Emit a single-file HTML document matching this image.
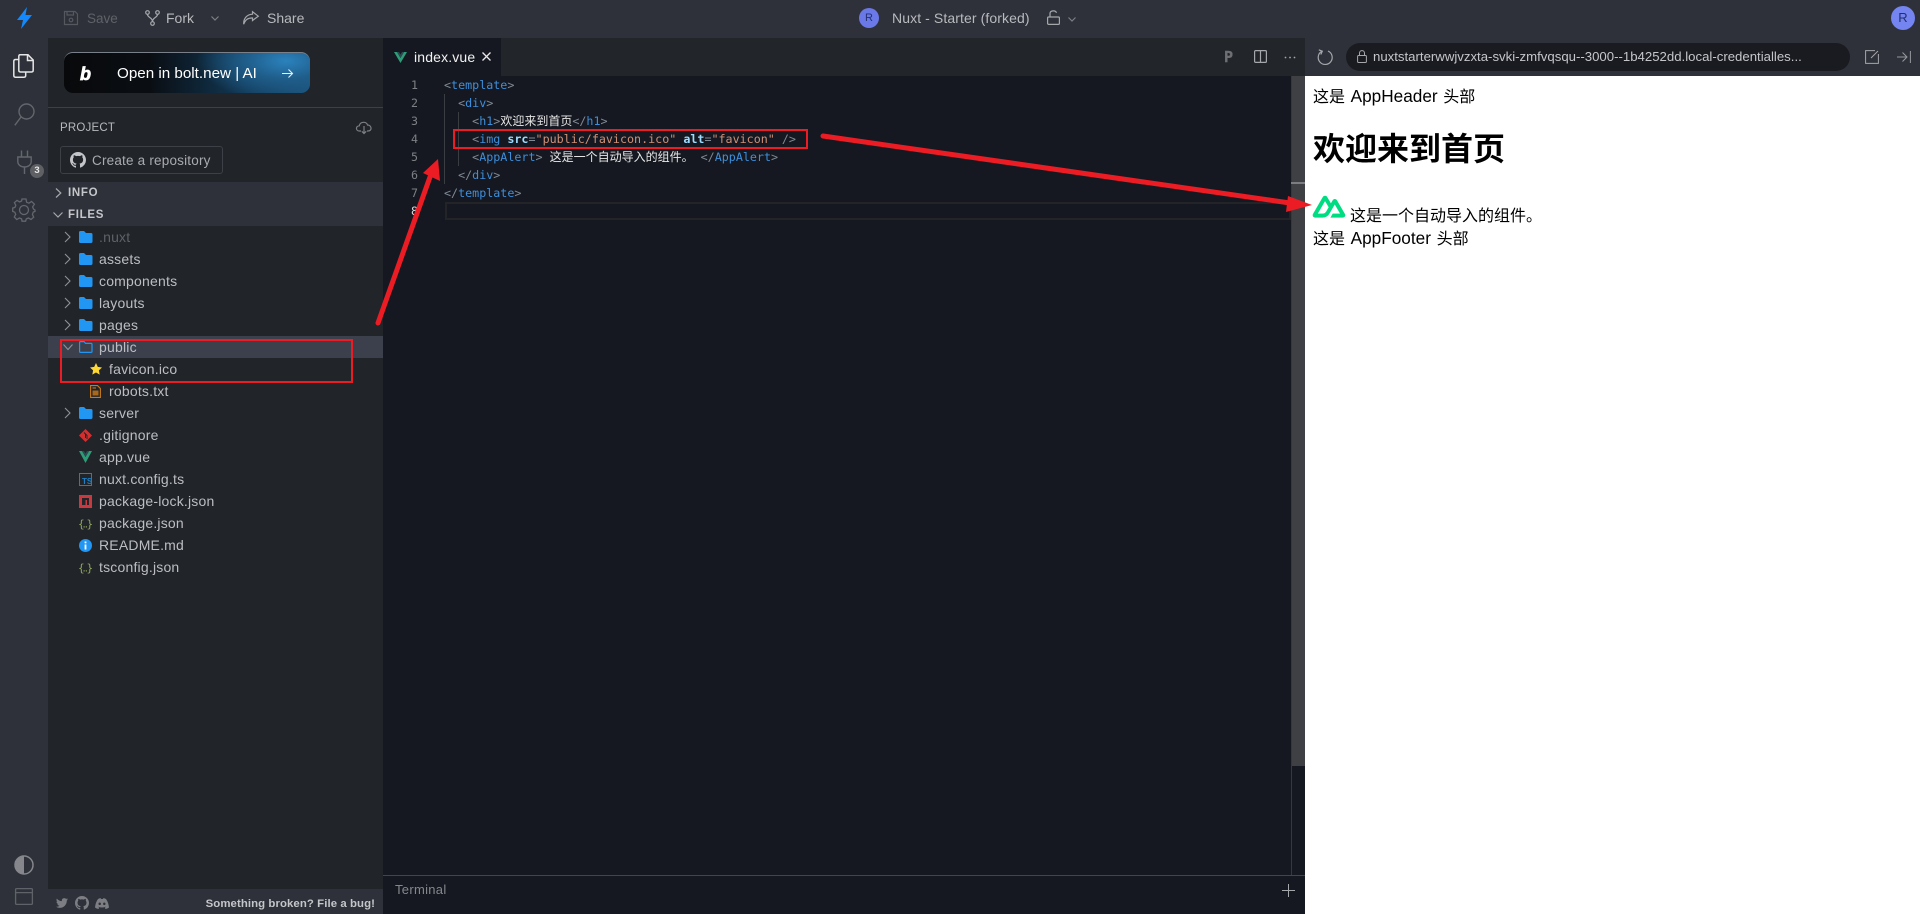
<!DOCTYPE html>
<html lang="zh"><head><meta charset="utf-8"><title>Nuxt - Starter (forked)</title>
<style>
*{box-sizing:border-box}
html,body{margin:0;padding:0;width:1920px;height:914px;overflow:hidden;background:#2e3139;font-family:"Liberation Sans","Noto Sans CJK SC",sans-serif}
.a{position:absolute}
svg{position:absolute;overflow:visible}
.t{position:absolute;white-space:nowrap;line-height:18px}
.row{position:absolute;left:99px;font-size:14px;letter-spacing:.2px;color:#bcbec4;white-space:nowrap;line-height:20px}
.c{position:absolute;left:444px;font:11.7px/18px "DejaVu Sans Mono","Noto Sans CJK SC",monospace;white-space:pre;color:#808a94;height:18px}
.c b{font-weight:400;color:#3d8fdc}
.c i{font-style:normal;color:#9cdcfe;font-weight:700}
.c u{text-decoration:none;color:#ce9178}
.c span{font-family:"Noto Sans CJK SC",sans-serif;font-size:12px;color:#e6e6e6}
.n{position:absolute;left:400px;width:18px;text-align:right;font:11.62px/18px "DejaVu Sans Mono",monospace;color:#7d8185}
.ic{fill:none;stroke:#7d7f85;stroke-width:1.2}
.pv{position:absolute;color:#000;font-size:16px;line-height:22px;white-space:nowrap;word-spacing:1.2px}
.pv em{font-style:normal;font-size:17.2px}
</style></head><body>

<!-- regions -->
<div class="a" style="left:48px;top:38px;width:335px;height:851px;background:#212429"></div>
<div class="a" style="left:48px;top:889px;width:335px;height:25px;background:#2e3139"></div>
<div class="a" style="left:383px;top:38px;width:922px;height:38px;background:#22252a"></div>
<div class="a" style="left:383px;top:38px;width:118px;height:38px;background:#151820"></div>
<div class="a" style="left:383px;top:76px;width:922px;height:838px;background:#151820"></div>
<div class="a" style="left:1305px;top:76px;width:615px;height:838px;background:#fff"></div>
<div class="a" style="left:1291px;top:76px;width:14px;height:690px;background:#3f4044"></div>
<div class="a" style="left:1291px;top:76px;width:1px;height:799px;background:#36383c"></div>
<div class="a" style="left:1291px;top:182px;width:14px;height:2px;background:#7b7d80"></div>
<div class="a" style="left:383px;top:875px;width:922px;height:1px;background:#43454c"></div>

<!-- top bar -->
<svg style="left:17px;top:7px" width="15" height="22" viewBox="0 0 15 22"><path d="M10 0 L0 13 H6 L4 22 L15 8 H8.5 Z" fill="#1389fd"/></svg>
<svg class="ic" style="left:64px;top:11px;stroke:#55585f" width="14" height="14" viewBox="0 0 14 14"><path d="M.5.5H11L13.5 3V13.5H.5Z"/><path d="M3 .5V4H9.5V.5"/><circle cx="7" cy="9" r="1.8"/></svg>
<div class="t" style="left:87px;top:10px;font-size:13.5px;color:#5f6269">Save</div>
<svg class="ic" style="left:145px;top:10px;stroke:#a5a7ab" width="15" height="16" viewBox="0 0 15 16"><circle cx="2.5" cy="2.5" r="1.8"/><circle cx="12.5" cy="2.5" r="1.8"/><circle cx="7.5" cy="13.5" r="1.8"/><path d="M2.5 4.3C2.5 8 7.5 7 7.5 11.7M12.5 4.3C12.5 8 7.5 7 7.5 11.7"/></svg>
<div class="t" style="left:166px;top:9px;font-size:14px;color:#b8babe">Fork</div>
<svg class="ic" style="left:211px;top:16px" width="8" height="5" viewBox="0 0 8 5"><path d="M.5.5L4 4 7.5.5"/></svg>
<svg class="ic" style="left:243px;top:11px;stroke:#a5a7ab" width="16" height="14" viewBox="0 0 16 14"><path d="M9.5.7L15.3 5.2 9.5 9.5V7C5 6.8 2.5 8.5.7 13.2.4 7.5 3.8 3.4 9.5 3.2Z"/></svg>
<div class="t" style="left:267px;top:9px;font-size:14px;color:#b8babe">Share</div>

<div class="a" style="left:859px;top:8px;width:20px;height:20px;border-radius:50%;background:#6b79e8;color:#23306f;font-size:11px;line-height:20px;text-align:center">R</div>
<div class="t" style="left:892px;top:9px;font-size:14px;letter-spacing:.1px;color:#b8babe">Nuxt - Starter (forked)</div>
<svg class="ic" style="left:1047px;top:10px;stroke:#a5a7ab" width="13" height="15" viewBox="0 0 13 15"><rect x=".6" y="7" width="11.8" height="7.4" rx="1"/><path d="M3 7V3.5C3 .5 8.5-.2 9.5 2.8"/></svg>
<svg class="ic" style="left:1068px;top:17px" width="8" height="5" viewBox="0 0 8 5"><path d="M.5.5L4 4 7.5.5"/></svg>
<div class="a" style="left:1891px;top:6px;width:24px;height:24px;border-radius:50%;background:#7484f0;color:#23306f;font-size:13px;line-height:24px;text-align:center">R</div>

<!-- activity bar -->
<svg class="ic" style="left:13px;top:54px;stroke:#e4e5e7;stroke-width:1.5" width="21" height="24" viewBox="0 0 21 24"><path d="M6 5.5H2.5Q.8 5.5.8 7.2V21.5Q.8 23.2 2.5 23.2H11Q12.7 23.2 12.7 21.5V18"/><path d="M7 .8H15L20.2 6V16.3Q20.2 18 18.5 18H7.5Q5.8 18 5.8 16.3V2.5Q5.8.8 7 .8Z"/><path d="M14.5.8V6.5H20.2"/></svg>
<svg class="ic" style="left:14px;top:103px;stroke:#63666c;stroke-width:1.4" width="21" height="23" viewBox="0 0 21 23"><circle cx="12.5" cy="8.5" r="7.5"/><path d="M7 14L.8 22.3"/></svg>
<svg class="ic" style="left:17px;top:150px;stroke:#63666c;stroke-width:1.4" width="15" height="24" viewBox="0 0 15 24"><path d="M4.5.5V7M10.5.5V7M.8 7H14.2V11.5C14.2 15 11 17 7.5 17S.8 15 .8 11.5ZM7.5 17V24"/></svg>
<div class="a" style="left:30px;top:164px;width:14px;height:14px;border-radius:50%;background:#5e6064;color:#e8e8e8;font-size:9.5px;font-weight:700;line-height:14px;text-align:center">3</div>
<svg class="ic" style="left:12px;top:198px;stroke:#63666c;stroke-width:1.3" width="24" height="24" viewBox="0 0 24 24"><path d="M10 1H14L14.6 4.2 16.9 5.2 19.6 3.4 22.4 6.2 20.6 8.9 21.6 11.2 23 12 V13.4 L21.3 14 20.4 16.3 21.7 19.2 19 21.5 16.4 20 14.3 20.9 13.6 23.2H10L9.6 20.9 7.4 20 4.8 21.6 2.3 19 3.7 16.3 2.8 14.2.7 13.4V10L2.9 9.5 3.8 7.3 2.4 4.7 5 2.4 7.6 3.9 9.6 3Z"/><circle cx="12" cy="12" r="4.5"/></svg>
<svg style="left:14px;top:855px" width="20" height="20" viewBox="0 0 20 20"><circle cx="10" cy="10" r="9" fill="none" stroke="#85878c" stroke-width="1.5"/><path d="M10 1A9 9 0 0 0 10 19Z" fill="#85878c"/></svg>
<svg class="ic" style="left:15px;top:888px;stroke:#5f6268;stroke-width:1.3" width="18" height="17" viewBox="0 0 18 17"><rect x=".6" y=".6" width="16.8" height="15.8" rx="1"/><path d="M.6 4.6H17.4"/></svg>

<!-- sidebar -->
<div class="a" style="left:64px;top:52px;width:246px;height:41px;border-radius:9px;background:radial-gradient(ellipse 90px 40px at 222px 8px,#2b82bd 0%,#1f5d8a 45%,rgba(18,50,75,0) 100%),linear-gradient(90deg,#08090b 0%,#0a0e13 35%,#123a58 75%,#1a5178 100%);border-top:1px solid #7a8089"></div>
<div class="t" style="left:80px;top:65px;font:italic 700 18px/18px 'Liberation Sans',sans-serif;color:#fff;-webkit-text-stroke:.7px #fff">b</div>
<div class="t" style="left:117px;top:64.5px;font-size:15.2px;color:#fff">Open in bolt.new | AI</div>
<svg style="left:282px;top:69px;fill:none;stroke:#e8edf2;stroke-width:1.1" width="11" height="9" viewBox="0 0 11 9"><path d="M0 4.5H10.5M6.500.5L10.500 4.500 6.500 8.500"/></svg>
<div class="a" style="left:48px;top:107px;width:335px;height:1px;background:#3d4047"></div>
<div class="t" style="left:60px;top:119px;font-size:11.5px;color:#b8babe;letter-spacing:.2px">PROJECT</div>
<svg class="ic" style="left:356px;top:121px" width="16" height="13" viewBox="0 0 16 13"><path d="M5 10H3.500C-.5 10-.5 5 3.300 4.800 4 .6 10.500 0 11.500 4 15.700 4 16.500 10 12 10H11"/><path d="M8 5V12.500M5.800 10.300L8 12.500 10.200 10.300"/></svg>
<div class="a" style="left:60px;top:146px;width:163px;height:28px;border:1px solid #3d4047;border-radius:3px"></div>
<svg style="left:70px;top:152px" width="16" height="16" viewBox="0 0 16 16"><path fill="#c3c5c9" d="M8 0C3.58 0 0 3.58 0 8c0 3.54 2.29 6.53 5.47 7.59.4.07.55-.17.55-.38 0-.19-.01-.82-.01-1.49-2.01.37-2.53-.49-2.69-.94-.09-.23-.48-.94-.82-1.13-.28-.15-.68-.52-.01-.53.63-.01 1.08.58 1.23.82.72 1.21 1.87.87 2.33.66.07-.52.28-.87.51-1.07-1.78-.2-3.64-.89-3.64-3.95 0-.87.31-1.59.82-2.15-.08-.2-.36-1.02.08-2.12 0 0 .67-.21 2.2.82.64-.18 1.32-.27 2-.27.68 0 1.36.09 2 .27 1.53-1.04 2.2-.82 2.2-.82.44 1.1.16 1.92.08 2.12.51.56.82 1.27.82 2.15 0 3.07-1.87 3.75-3.65 3.95.29.25.54.73.54 1.48 0 1.07-.01 1.93-.01 2.2 0 .21.15.46.55.38A8.013 8.013 0 0016 8c0-4.42-3.58-8-8-8z"/></svg>
<div class="t" style="left:92px;top:152px;font-size:13.5px;letter-spacing:.2px;color:#a9abb0">Create a repository</div>

<div class="a" style="left:48px;top:182px;width:335px;height:44px;background:#2e3139"></div>
<svg class="ic" style="left:55px;top:188px;stroke:#a5a7ab" width="7" height="10" viewBox="0 0 7 10"><path d="M1 .5L5.800 5 1 9.500"/></svg>
<svg class="ic" style="left:53px;top:212px;stroke:#a5a7ab" width="10" height="6" viewBox="0 0 10 6"><path d="M.5.5L5 5 9.500.5"/></svg>
<div class="t" style="left:68px;top:184px;font-size:11.5px;font-weight:700;letter-spacing:.7px;color:#c4c6ca">INFO</div>
<div class="t" style="left:68px;top:206px;font-size:11.5px;font-weight:700;letter-spacing:.7px;color:#c4c6ca">FILES</div>

<div class="a" style="left:48px;top:336px;width:335px;height:22px;background:#3c404d"></div>

<!-- chevrons -->
<svg style="left:64px;top:232px;fill:none;stroke:#8f9197;stroke-width:1.1" width="8" height="190" viewBox="0 0 8 190"><path d="M1 0L6 5 1 10M1 22L6 27 1 32M1 44L6 49 1 54M1 66L6 71 1 76M1 88L6 93 1 98M1 176L6 181 1 186"/></svg>
<svg style="left:63px;top:344px;fill:none;stroke:#8f9197;stroke-width:1.1" width="10" height="6" viewBox="0 0 10 6"><path d="M.5.5L5 5.500 9.500.5"/></svg>

<!-- folders -->
<svg width="0" height="0" style="position:absolute"><defs><path id="fd" d="M0 1.500Q0 0 1.500 0H5L7 2H12Q13.500 2 13.500 3.500V10.500Q13.500 12 12 12H1.500Q0 12 0 10.500Z" fill="#2196f3"/></defs></svg>
<svg style="left:79px;top:231px" width="14" height="12"><use href="#fd"/></svg>
<svg style="left:79px;top:253px" width="14" height="12"><use href="#fd"/></svg>
<svg style="left:79px;top:275px" width="14" height="12"><use href="#fd"/></svg>
<svg style="left:79px;top:297px" width="14" height="12"><use href="#fd"/></svg>
<svg style="left:79px;top:319px" width="14" height="12"><use href="#fd"/></svg>
<svg style="left:79px;top:407px" width="14" height="12"><use href="#fd"/></svg>
<svg style="left:79px;top:341px;fill:none;stroke:#2196f3;stroke-width:1.2" width="14" height="12" viewBox="0 0 14 12"><path d="M.6 1.500Q.6.6 1.500.6H5L6.600 2.400H12Q13 2.400 13 3.500V10.500Q13 11.400 12 11.400H1.500Q.6 11.400.6 10.500Z"/></svg>

<!-- file icons -->
<svg style="left:90px;top:363px" width="12" height="12" viewBox="0 0 12 12"><path d="M6 0L7.800 3.900 12 4.500 8.900 7.400 9.700 11.600 6 9.500 2.300 11.600 3.100 7.400 0 4.500 4.200 3.900Z" fill="#fdd835"/></svg>
<svg style="left:90px;top:385px;fill:none;stroke:#c67a1e;stroke-width:1.1" width="11" height="13" viewBox="0 0 11 13"><path d="M.6.6H7.500L10.400 3.500V12.400H.6Z"/><rect x="2.500" y="5.500" width="6" height="5" fill="#a8681c" stroke="none"/><path d="M2.500 3H6"/></svg>
<svg style="left:79px;top:429px" width="13" height="13" viewBox="0 0 13 13"><path d="M6.500 0L13 6.500 6.500 13 0 6.500Z" fill="#d32f2f"/><path d="M5 3.500L8 6.500V10M6.500 5V9" stroke="#212429" stroke-width="1" fill="none"/></svg>
<svg style="left:79px;top:451px" width="13" height="12" viewBox="0 0 13 12"><path d="M0 0H3L6.500 6 10 0H13L6.500 12Z" fill="#2e9c78"/><path d="M3 0H5L6.500 2.500 8 0H10L6.500 6Z" fill="#2c4a52"/></svg>
<svg style="left:79px;top:473px;fill:none;stroke:#1f7fc4;stroke-width:1" width="13" height="13" viewBox="0 0 13 13"><rect x=".5" y=".5" width="12" height="12"/><text x="3" y="11" font-size="8" font-family="Liberation Sans,sans-serif" font-weight="700" fill="#1f7fc4" stroke="none">TS</text></svg>
<svg style="left:79px;top:495px" width="13" height="13" viewBox="0 0 13 13"><rect width="13" height="13" fill="#c83a3f"/><path d="M3 3H10V10H8V5H6.500V10H3Z" fill="#212429"/></svg>
<svg style="left:78px;top:517px" width="15" height="13" viewBox="0 0 15 13"><text x="0" y="10.500" font-size="11" font-family="DejaVu Sans Mono,monospace" fill="#8fa85a">{</text><text x="8.500" y="10.500" font-size="11" font-family="DejaVu Sans Mono,monospace" fill="#8fa85a">}</text><text x="5" y="10.500" font-size="8" fill="#8fa85a" font-family="Liberation Sans,sans-serif" font-weight="700">..</text></svg>
<svg style="left:79px;top:539px" width="13" height="13" viewBox="0 0 13 13"><circle cx="6.500" cy="6.500" r="6.500" fill="#2196f3"/><rect x="5.600" y="5.500" width="1.800" height="5" fill="#fff"/><rect x="5.600" y="2.500" width="1.800" height="1.800" fill="#fff"/></svg>
<svg style="left:78px;top:561px" width="15" height="13" viewBox="0 0 15 13"><text x="0" y="10.500" font-size="11" font-family="DejaVu Sans Mono,monospace" fill="#8fa85a">{</text><text x="8.500" y="10.500" font-size="11" font-family="DejaVu Sans Mono,monospace" fill="#8fa85a">}</text><text x="5" y="10.500" font-size="8" fill="#8fa85a" font-family="Liberation Sans,sans-serif" font-weight="700">..</text></svg>

<!-- file names -->
<div class="row" style="top:227px;color:#5e6167">.nuxt</div>
<div class="row" style="top:249px">assets</div>
<div class="row" style="top:271px">components</div>
<div class="row" style="top:293px">layouts</div>
<div class="row" style="top:315px">pages</div>
<div class="row" style="top:337px">public</div>
<div class="row" style="top:359px;left:109px">favicon.ico</div>
<div class="row" style="top:381px;left:109px">robots.txt</div>
<div class="row" style="top:403px">server</div>
<div class="row" style="top:425px">.gitignore</div>
<div class="row" style="top:447px">app.vue</div>
<div class="row" style="top:469px">nuxt.config.ts</div>
<div class="row" style="top:491px">package-lock.json</div>
<div class="row" style="top:513px">package.json</div>
<div class="row" style="top:535px">README.md</div>
<div class="row" style="top:557px">tsconfig.json</div>

<!-- status -->
<svg style="left:56px;top:897px" width="12" height="12" viewBox="0 0 24 24"><path fill="#7c7e84" d="M23.953 4.57a10 10 0 01-2.825.775 4.958 4.958 0 002.163-2.723c-.951.555-2.005.959-3.127 1.184a4.92 4.920 0 00-8.384 4.482C7.690 8.095 4.067 6.130 1.640 3.162a4.822 4.822 0 00-.666 2.475c0 1.710.870 3.213 2.188 4.096a4.904 4.904 0 01-2.228-.616v.060a4.923 4.923 0 003.946 4.827 4.996 4.996 0 01-2.212.085 4.936 4.936 0 004.604 3.417 9.867 9.867 0 01-6.102 2.105c-.390 0-.779-.023-1.170-.067a13.995 13.995 0 007.557 2.209c9.053 0 13.998-7.496 13.998-13.985 0-.210 0-.420-.015-.630A9.935 9.935 0 0024 4.590z"/></svg>
<svg style="left:75px;top:896px" width="14" height="14" viewBox="0 0 16 16"><path fill="#7c7e84" d="M8 0C3.58 0 0 3.58 0 8c0 3.54 2.29 6.53 5.47 7.59.4.07.55-.17.55-.38 0-.19-.01-.82-.01-1.49-2.01.37-2.53-.49-2.69-.94-.09-.23-.48-.94-.82-1.13-.28-.15-.68-.52-.01-.53.63-.01 1.08.58 1.23.82.72 1.21 1.87.87 2.33.66.07-.52.28-.87.51-1.07-1.78-.2-3.64-.89-3.64-3.95 0-.87.31-1.59.82-2.15-.08-.2-.36-1.02.08-2.12 0 0 .67-.21 2.2.82.64-.18 1.32-.27 2-.27.68 0 1.36.09 2 .27 1.53-1.04 2.2-.82 2.2-.82.44 1.1.16 1.92.08 2.12.51.56.82 1.27.82 2.15 0 3.07-1.87 3.75-3.65 3.95.29.25.54.73.54 1.48 0 1.07-.01 1.93-.01 2.2 0 .21.15.46.55.38A8.013 8.013 0 0016 8c0-4.42-3.58-8-8-8z"/></svg>
<svg style="left:95px;top:898px" width="14" height="11" viewBox="0 0 14 11"><path fill-rule="evenodd" fill="#7c7e84" d="M3 1Q4.500.2 5.500 0L6 1H8L8.500 0Q9.500.2 11 1 13.500 4.500 14 9.500 12.500 10.700 10.500 11L9.700 9.600 10.800 9 10.500 8.700Q7 10.200 3.500 8.700L3.200 9 4.300 9.600 3.500 11Q1.500 10.700 0 9.500 .5 4.500 3 1ZM4.700 4.500A1.200 1.300 0 1 0 4.701 7.100 1.200 1.300 0 1 0 4.700 4.500ZM9.300 4.500A1.200 1.300 0 1 0 9.301 7.100 1.200 1.300 0 1 0 9.300 4.500Z"/></svg>
<div class="t" style="right:1545px;top:895px;font-size:11.4px;letter-spacing:.08px;font-weight:700;color:#c4c6ca">Something broken? File a bug!</div>

<!-- tab -->
<svg style="left:394px;top:52px" width="13" height="11" viewBox="0 0 13 11"><path d="M0 0H3L6.500 6 10 0H13L6.500 11Z" fill="#2e9c78"/><path d="M3 0H5L6.500 2.500 8 0H10L6.500 6Z" fill="#2c4a52"/></svg>
<div class="t" style="left:414px;top:48px;font-size:14px;letter-spacing:.15px;color:#f2f2f2">index.vue</div>
<svg style="left:482px;top:52px;fill:none;stroke:#e8e8e8;stroke-width:1.3" width="9" height="9" viewBox="0 0 9 9"><path d="M.5.5L8.500 8.500M8.500.5L.5 8.500"/></svg>

<!-- code -->
<div class="a" style="left:444px;top:94px;width:1px;height:90px;background:#3a3d42"></div>
<div class="a" style="left:458px;top:112px;width:1px;height:54px;background:#3a3d42"></div>
<div class="a" style="left:445px;top:202px;width:846px;height:18px;border:2px solid #222428"></div>
<div class="n" style="top:76px">1</div><div class="n" style="top:94px">2</div><div class="n" style="top:112px">3</div><div class="n" style="top:130px">4</div><div class="n" style="top:148px">5</div><div class="n" style="top:166px">6</div><div class="n" style="top:184px">7</div><div class="n" style="top:202px;color:#d8dadc">8</div>
<div class="c" style="top:76px">&lt;<b>template</b>&gt;</div>
<div class="c" style="top:94px">  &lt;<b>div</b>&gt;</div>
<div class="c" style="top:112px">    &lt;<b>h1</b>&gt;<span>欢迎来到首页</span>&lt;/<b>h1</b>&gt;</div>
<div class="c" style="top:130px">    &lt;<b>img</b> <i>src</i>=<u>"public/favicon.ico"</u> <i>alt</i>=<u>"favicon"</u> /&gt;</div>
<div class="c" style="top:148px">    &lt;<b>AppAlert</b>&gt; <span>这是一个自动导入的组件。</span> &lt;/<b>AppAlert</b>&gt;</div>
<div class="c" style="top:166px">  &lt;/<b>div</b>&gt;</div>
<div class="c" style="top:184px">&lt;/<b>template</b>&gt;</div>

<!-- editor toolbar -->
<div class="t" style="left:1224px;top:48px;font:700 15px/18px 'DejaVu Sans Mono',monospace;color:#6d6f73;-webkit-text-stroke:.4px #6d6f73">P</div>
<svg class="ic" style="left:1254px;top:50px;stroke:#a5a7ab" width="13" height="13" viewBox="0 0 13 13"><rect x=".6" y=".6" width="11.800" height="11.800" rx="1"/><path d="M6.500.6V12.400"/></svg>
<svg style="left:1284px;top:56px" width="12" height="3"><circle cx="1.500" cy="1.500" r=".9" fill="#a5a7ab"/><circle cx="6" cy="1.500" r=".9" fill="#a5a7ab"/><circle cx="10.500" cy="1.500" r=".9" fill="#a5a7ab"/></svg>
<svg class="ic" style="left:1317px;top:49px;stroke:#a5a7ab;stroke-width:1.2" width="16" height="16" viewBox="0 0 16 16"><path d="M5 2.200A7 7 0 1 0 11 2"/><path d="M1.800.8L5.300 2.200 3.800 5.500"/></svg>

<!-- url bar -->
<div class="a" style="left:1346px;top:43px;width:504px;height:28px;border-radius:14px;background:#191b20"></div>
<svg class="ic" style="left:1357px;top:50px;stroke:#a5a7ab;stroke-width:1" width="10" height="13" viewBox="0 0 10 13"><rect x=".6" y="5.500" width="8.800" height="7" rx="1"/><path d="M2.500 5.500V3C2.500-.2 7.500-.2 7.500 3V5.500"/></svg>
<div class="t" style="left:1373px;top:48px;width:463px;font-size:13.2px;color:#c4c6ca;overflow:hidden">nuxtstarterwwjvzxta-svki-zmfvqsqu--3000--1b4252dd.local-credentialles...</div>
<svg class="ic" style="left:1865px;top:50px;stroke:#a5a7ab;stroke-width:1" width="14" height="14" viewBox="0 0 14 14"><path d="M13.400 4V13.400H.6V.6H10"/><path d="M6 8L13 1"/></svg>
<svg class="ic" style="left:1897px;top:51px;stroke:#96989d;stroke-width:1" width="14" height="12" viewBox="0 0 14 12"><path d="M0 6H10M5.500 1.500L10 6 5.500 10.500M13.400 0V12"/></svg>

<!-- terminal -->
<div class="t" style="left:395px;top:881px;font-size:13px;letter-spacing:.3px;color:#85878c">Terminal</div>
<svg style="left:1282px;top:884px;fill:none;stroke:#a5a7ab;stroke-width:1" width="13" height="13" viewBox="0 0 13 13"><path d="M6.500 0V13M0 6.500H13"/></svg>

<!-- preview -->
<div class="pv" style="left:1313px;top:85px">这是 <em>AppHeader</em> 头部</div>
<div class="pv" style="left:1313px;top:130px;font-size:32px;line-height:38px;font-weight:700">欢迎来到首页</div>
<svg style="left:1313px;top:196px" width="32" height="21.4" viewBox="44 115 424 283"><path fill="#00dc82" stroke="#00dc82" stroke-width="8" d="M281.440 397.667H438.320C443.326 397.667 448.118 395.908 452.453 393.427C456.789 390.946 461.258 387.831 463.760 383.533C466.262 379.236 468.002 374.360 468 369.399C467.998 364.437 466.266 359.563 463.760 355.268L357.760 172.947C355.258 168.650 352.201 165.534 347.867 163.053C343.532 160.573 337.325 158.813 332.320 158.813C327.315 158.813 322.521 160.573 318.187 163.053C313.852 165.534 310.795 168.650 308.293 172.947L281.440 219.587L227.733 129.130C225.229 124.834 222.176 120.307 217.840 117.827C213.504 115.346 208.713 115 203.707 115C198.701 115 193.909 115.346 189.573 117.827C185.238 120.307 180.771 124.834 178.267 129.130L46.827 355.268C44.321 359.563 44.002 364.437 44 369.399C43.998 374.360 44.325 379.235 46.827 383.533C49.329 387.830 53.798 390.946 58.133 393.427C62.469 395.908 67.260 397.667 72.267 397.667H171.200C210.401 397.667 238.934 380.082 258.827 346.787L306.880 263.400L332.320 219.587L410.053 352.440H306.880L281.440 397.667ZM169.787 352.440H100.533L203.707 174.360L256 263.400L221.361 323.784C208.151 345.387 193.089 352.440 169.787 352.440Z"/></svg>
<div class="pv" style="left:1350px;top:206px">这是一个自动导入的组件。</div>
<div class="pv" style="left:1313px;top:227px">这是 <em>AppFooter</em> 头部</div>

<!-- annotations -->
<svg style="left:0;top:0" width="1920" height="914" viewBox="0 0 1920 914">
<rect x="61" y="340" width="291" height="42" fill="none" stroke="#ec1c24" stroke-width="2"/>
<rect x="454" y="130" width="353" height="18" fill="none" stroke="#ec1c24" stroke-width="2"/>
<path d="M378 323L430 177" stroke="#ec1c24" stroke-width="5" stroke-linecap="round" fill="none"/>
<path d="M438 159L423 173 440 181Z" fill="#ec1c24"/>
<path d="M823 136L1290 203" stroke="#ec1c24" stroke-width="5" stroke-linecap="round" fill="none"/>
<path d="M1312 205L1288 196 1286 212Z" fill="#ec1c24"/>
</svg>
</body></html>
